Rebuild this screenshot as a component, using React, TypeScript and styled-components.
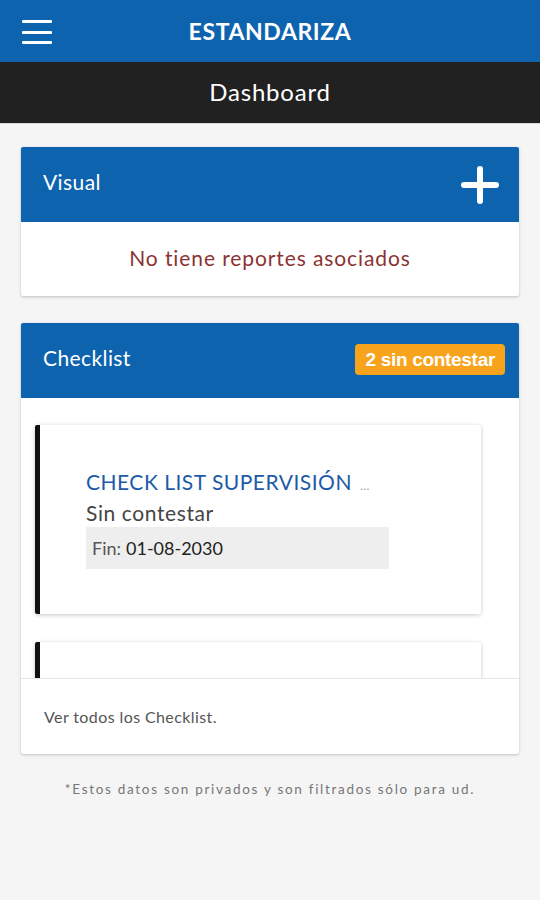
import React from "react";
import styled, { createGlobalStyle } from "styled-components";

const Global = createGlobalStyle`
  html, body { margin: 0; padding: 0; background: #f5f5f5; }
  body { font-family: "Lato", "Open Sans", sans-serif; }
  * { box-sizing: border-box; }
`;

const Page = styled.div`
  width: 540px;
  min-height: 900px;
  background: #f5f5f5;
  display: flex;
  flex-direction: column;
`;

const TopBar = styled.header`
  height: 62px;
  background: #0d63ae;
  display: flex;
  align-items: center;
  position: relative;
  justify-content: center;
`;

const MenuButton = styled.button`
  position: absolute;
  left: 22px;
  top: 20px;
  width: 30px;
  height: 24px;
  padding: 0;
  border: 0;
  background: none;
  display: flex;
  flex-direction: column;
  justify-content: space-between;
  span {
    display: block;
    height: 3px;
    background: #fff;
    border-radius: 1px;
  }
`;

const AppTitle = styled.h1`
  margin: 0;
  color: #fff;
  font-size: 23px;
  font-weight: 700;
  letter-spacing: 0.6px;
`;

const SubBar = styled.div`
  height: 62px;
  background: #212121;
  border-bottom: 1px solid #d8d8d8;
  display: flex;
  align-items: center;
  justify-content: center;
  color: #fff;
  font-size: 24px;
  letter-spacing: 0.8px;
  padding-bottom: 2px;
`;

const Main = styled.main`
  padding: 23px 21px 0;
  display: flex;
  flex-direction: column;
  gap: 27px;
`;

const Card = styled.section`
  background: #fff;
  box-shadow: 0 1px 3px rgba(0, 0, 0, 0.22);
  border-radius: 2px;
  overflow: hidden;
`;

const CardHeader = styled.div`
  height: 75px;
  background: #0d63ae;
  color: #fff;
  display: flex;
  align-items: center;
  justify-content: space-between;
  padding: 0 14px 7px 22px;
  font-size: 21px;
  letter-spacing: 0.4px;
`;

const PlusIcon = styled.svg`
  width: 38px;
  height: 38px;
  margin-right: 6px;
  margin-top: 7px;
`;

const EmptyText = styled.div`
  height: 74px;
  display: flex;
  align-items: center;
  justify-content: center;
  color: #8b3333;
  font-size: 21px;
  letter-spacing: 0.9px;
  padding-bottom: 4px;
`;

const Badge = styled.span`
  background: #f8a31c;
  color: #fff;
  font-family: "Liberation Sans", Arial, sans-serif;
  font-weight: 700;
  font-size: 19px;
  letter-spacing: -0.3px;
  padding: 0 10px;
  height: 31px;
  display: flex;
  align-items: center;
  border-radius: 4px;
  margin-top: 5px;
`;

const ScrollArea = styled.div`
  height: 281px;
  overflow: hidden;
  padding: 27px 38px 0 14px;
  display: flex;
  flex-direction: column;
  gap: 28px;
  border-bottom: 1px solid #e6e6e6;
`;

const Item = styled.div`
  flex: none;
  background: #fff;
  border-left: 5px solid #111;
  border-radius: 2px;
  box-shadow: 0 1px 4px rgba(0, 0, 0, 0.22);
  padding: 43px 20px 45px 46px;
  min-height: 188px;
`;

const ItemTitle = styled.div`
  color: #1d5ba8;
  font-size: 21px;
  letter-spacing: 0.5px;
  white-space: nowrap;
  line-height: 28px;
  small {
    font-size: 12px;
    color: #8a9bb5;
    margin-left: 8px;
  }
`;

const ItemStatus = styled.div`
  color: #444;
  font-size: 21px;
  letter-spacing: 0.6px;
  line-height: 26px;
  margin-bottom: 1px;
`;

const DateBox = styled.div`
  width: 303px;
  height: 42px;
  background: #eeeeee;
  display: flex;
  align-items: center;
  padding-left: 6px;
  font-size: 18px;
  color: #555;
  b {
    color: #222;
    font-weight: 400;
    margin-left: 5px;
  }
`;

const Footer = styled.div`
  height: 75px;
  display: flex;
  align-items: center;
  padding: 0 23px 0;
  color: #555;
  font-size: 16px;
  letter-spacing: 0.4px;
  padding-bottom: 1px;
`;

const Disclaimer = styled.p`
  margin: 0;
  text-align: center;
  color: #777;
  font-size: 13.5px;
  letter-spacing: 1.7px;
`;

export default function App() {
  return (
    <Page>
      <Global />
      <TopBar>
        <MenuButton aria-label="menu">
          <span />
          <span />
          <span />
        </MenuButton>
        <AppTitle>ESTANDARIZA</AppTitle>
      </TopBar>
      <SubBar>Dashboard</SubBar>
      <Main>
        <Card>
          <CardHeader>
            <span>Visual</span>
            <PlusIcon viewBox="0 0 38 38">
              <path
                d="M19 3v32M3 19h32"
                stroke="#fff"
                strokeWidth="6"
                strokeLinecap="round"
                fill="none"
              />
            </PlusIcon>
          </CardHeader>
          <EmptyText>No tiene reportes asociados</EmptyText>
        </Card>
        <Card>
          <CardHeader>
            <span>Checklist</span>
            <Badge>2 sin contestar</Badge>
          </CardHeader>
          <ScrollArea>
            <Item>
              <ItemTitle>
                CHECK LIST SUPERVISIÓN<small>...</small>
              </ItemTitle>
              <ItemStatus>Sin contestar</ItemStatus>
              <DateBox>
                Fin:<b>01-08-2030</b>
              </DateBox>
            </Item>
            <Item />
          </ScrollArea>
          <Footer>Ver todos los Checklist.</Footer>
        </Card>
        <Disclaimer>*Estos datos son privados y son filtrados sólo para ud.</Disclaimer>
      </Main>
    </Page>
  );
}
